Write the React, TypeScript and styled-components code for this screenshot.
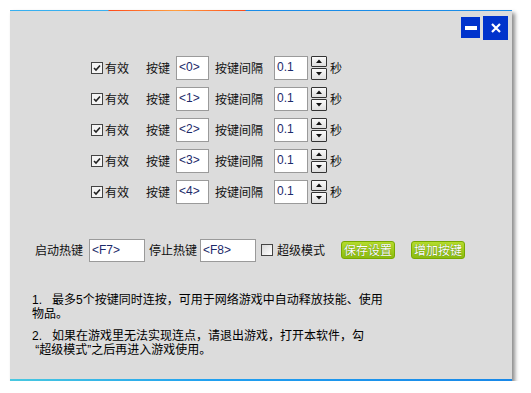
import React from 'react';
import styled, { createGlobalStyle } from 'styled-components';

const GlobalStyle = createGlobalStyle`
  html, body {
    margin: 0;
    padding: 0;
    background: #ffffff;
  }
  body {
    font-family: "Noto Sans CJK SC", "Noto Sans", sans-serif;
    font-size: 12px;
    color: #111;
  }
`;

// 窗口主体
const Window = styled.div`
  position: relative;
  margin: 10px 0 0 10px;
  width: 502px;
  height: 371px;
  background: #dcdcdc;
  display: flex;
  flex-direction: column;
  box-shadow: 3px 3px 4px rgba(0, 0, 0, 0.45);
`;

const TopLine = styled.div`
  height: 1px;
  flex: none;
  background: linear-gradient(
    to right,
    #38b0f0 0px,
    #38b0f0 98px,
    #ff4a1a 99px,
    #ffa040 165px,
    #ff4a1a 235px,
    #1a8ce8 236px,
    #1a8ce8 100%
  );
`;

const BottomLine = styled.div`
  margin-top: auto;
  height: 2px;
  flex: none;
  background: linear-gradient(to right, #48c8e0, #20a0f0 40%, #1888e8);
`;

const TitleBar = styled.div`
  height: 33px;
  display: flex;
  align-items: center;
  justify-content: flex-end;
  gap: 3px;
  padding-right: 4px;
`;

const WinButton = styled.div<{ $w: number; $h: number }>`
  width: ${(p) => p.$w}px;
  height: ${(p) => p.$h}px;
  background: #0033cc;
  display: flex;
  align-items: center;
  justify-content: center;
`;

const Rows = styled.div`
  margin-top: 8px;
  padding-left: 81px;
  display: flex;
  flex-direction: column;
`;

const Row = styled.div`
  height: 31px;
  display: flex;
  align-items: center;
`;

const Label = styled.span<{ $ml?: number }>`
  margin-left: ${(p) => p.$ml ?? 0}px;
  white-space: nowrap;
  line-height: 16px;
`;

const Input = styled.div<{ $w: number; $h?: number; $ml?: number }>`
  box-sizing: border-box;
  width: ${(p) => p.$w}px;
  height: ${(p) => p.$h ?? 24}px;
  margin-left: ${(p) => p.$ml ?? 0}px;
  background: #fff;
  border: 1px solid #9a9a9a;
  font-family: "Liberation Sans", Arial, sans-serif;
  font-size: 12px;
  color: #1c2a6a;
  padding: 3px 0 0 2px;
  line-height: 14px;
`;

const CheckBox = styled.div<{ $checked?: boolean; $ml?: number }>`
  box-sizing: border-box;
  width: 12px;
  height: 12px;
  margin-left: ${(p) => p.$ml ?? 0}px;
  border: 1px solid #444;
  background: ${(p) =>
    p.$checked ? '#f4f4f4' : 'linear-gradient(135deg, #d8d8d8, #ffffff)'};
  display: flex;
  align-items: center;
  justify-content: center;
  flex: none;
`;

const Spin = styled.div`
  margin-left: 3px;
  width: 16px;
  height: 24px;
  display: flex;
  flex-direction: column;
  gap: 1px;
`;

const SpinHalf = styled.div`
  box-sizing: border-box;
  flex: 1;
  border: 1px solid #333;
  border-radius: 1px;
  background: linear-gradient(#fafafa, #dedede);
  display: flex;
  align-items: center;
  justify-content: center;
`;

const HotkeyRow = styled.div`
  margin-top: 31px;
  padding-left: 25px;
  height: 24px;
  display: flex;
  align-items: center;
`;

const GreenButton = styled.div<{ $ml: number }>`
  box-sizing: border-box;
  margin-left: ${(p) => p.$ml}px;
  width: 54px;
  height: 18px;
  border: 1px solid #78a800;
  border-radius: 3px;
  background: linear-gradient(#b4dc2c, #8cbc10);
  color: #fff;
  font-size: 12px;
  line-height: 16px;
  text-align: center;
  text-shadow: 0 0 1px #3c6000;
`;

const Notes = styled.div`
  margin-top: 32px;
  padding-left: 22px;
  display: flex;
  flex-direction: column;
  gap: 9px;
`;

const Para = styled.div`
  font-family: "Liberation Sans", "Noto Sans CJK SC", sans-serif;
  font-size: 12px;
  line-height: 13.5px;
  color: #000;
`;

const Line = styled.div`
  white-space: nowrap;
`;

function Tick() {
  return (
    <svg width="8" height="8" viewBox="0 0 8 8">
      <path d="M1 4 L3 6 L7 1.5" fill="none" stroke="#222" strokeWidth="1.6" />
    </svg>
  );
}

function Arrow({ up }: { up?: boolean }) {
  return (
    <svg width="6" height="4" viewBox="0 0 6 4">
      <path d={up ? 'M0 4 L3 0.5 L6 4 Z' : 'M0 0 L3 3.5 L6 0 Z'} fill="#111" />
    </svg>
  );
}

const keys = ['<0>', '<1>', '<2>', '<3>', '<4>'];

function KeyRow({ name }: { name: string }) {
  return (
    <Row>
      <CheckBox $checked>
        <Tick />
      </CheckBox>
      <Label $ml={2}>有效</Label>
      <Label $ml={17}>按键</Label>
      <Input $w={33} $ml={6}>{name}</Input>
      <Label $ml={6}>按键间隔</Label>
      <Input $w={34} $ml={11}>0.1</Input>
      <Spin>
        <SpinHalf>
          <Arrow up />
        </SpinHalf>
        <SpinHalf>
          <Arrow />
        </SpinHalf>
      </Spin>
      <Label $ml={3}>秒</Label>
    </Row>
  );
}

export default function App() {
  return (
    <>
      <GlobalStyle />
      <Window>
        <TopLine />
        <TitleBar>
          <WinButton $w={19} $h={21}>
            <svg width="12" height="4" viewBox="0 0 12 4">
              <rect width="12" height="4" fill="#fff" />
            </svg>
          </WinButton>
          <WinButton $w={25} $h={24}>
            <svg width="10" height="10" viewBox="0 0 10 10">
              <path d="M1 1 L9 9 M9 1 L1 9" stroke="#fff" strokeWidth="2.2" />
            </svg>
          </WinButton>
        </TitleBar>
        <Rows>
          {keys.map((k) => (
            <KeyRow key={k} name={k} />
          ))}
        </Rows>
        <HotkeyRow>
          <Label>启动热键</Label>
          <Input $w={56} $h={23} $ml={6}>{'<F7>'}</Input>
          <Label $ml={4}>停止热键</Label>
          <Input $w={56} $h={23} $ml={3}>{'<F8>'}</Input>
          <CheckBox $ml={5} />
          <Label $ml={4}>超级模式</Label>
          <GreenButton $ml={16}>保存设置</GreenButton>
          <GreenButton $ml={16}>增加按键</GreenButton>
        </HotkeyRow>
        <Notes>
          <Para>
            <Line>1.&nbsp;&nbsp;&nbsp;最多5个按键同时连按，可用于网络游戏中自动释放技能、使用</Line>
            <Line>物品。</Line>
          </Para>
          <Para>
            <Line>2.&nbsp;&nbsp;&nbsp;如果在游戏里无法实现连点，请退出游戏，打开本软件，勾</Line>
            <Line>&nbsp;“超级模式”之后再进入游戏使用。</Line>
          </Para>
        </Notes>
        <BottomLine />
      </Window>
    </>
  );
}
